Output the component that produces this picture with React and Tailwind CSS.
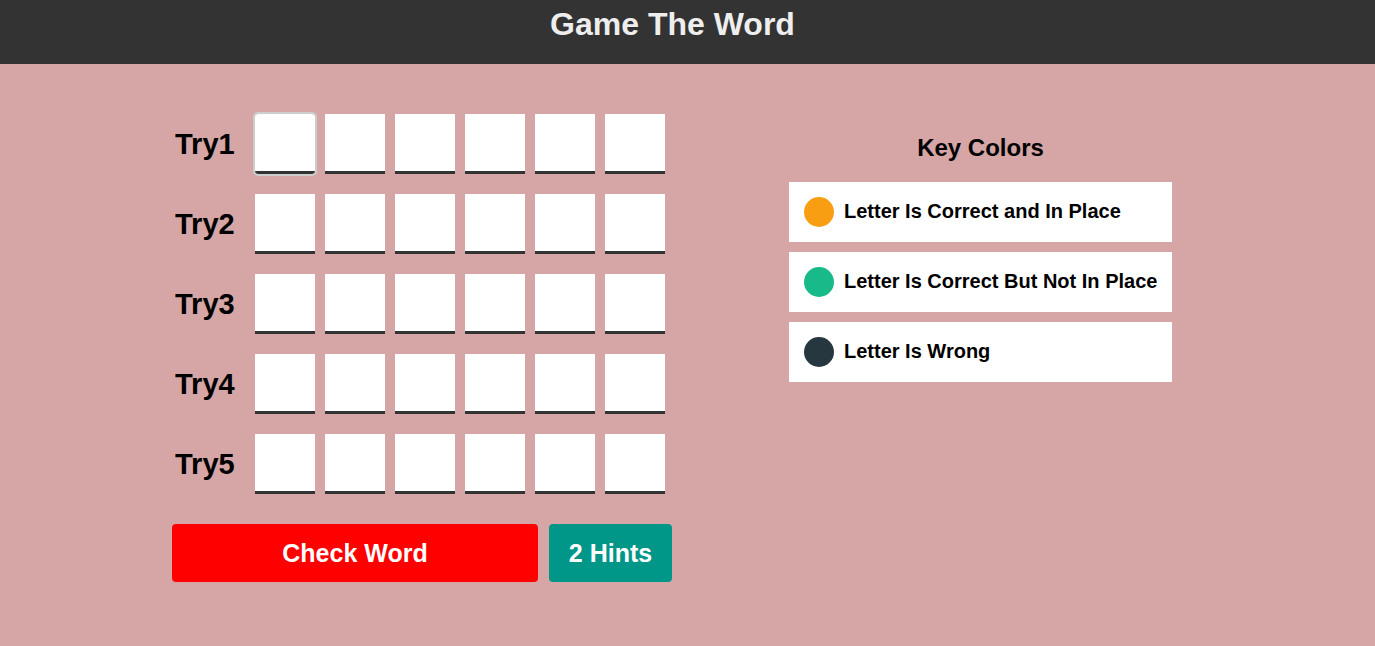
export default function App() {
  const rows = [1, 2, 3, 4, 5];
  const cells = [0, 1, 2, 3, 4, 5];
  const keys = [
    { c: "bg-[#f89e13]", t: "Letter Is Correct and In Place" },
    { c: "bg-[#18ba89]", t: "Letter Is Correct But Not In Place" },
    { c: "bg-[#27373f]", t: "Letter Is Wrong" },
  ];
  return (
    <div className="min-h-[646px] bg-[#d6a5a5] font-['Liberation_Sans',Arial,sans-serif]">
      <header className="h-[64px] bg-[#333333] flex justify-center pt-[5px] pr-[30px]">
        <h1 className="text-[32px] font-bold text-[#eeeeee] leading-[38px]">Game The Word</h1>
      </header>
      <div className="flex pl-[172px] pt-[50px]">
        <div className="w-[500px] flex flex-col">
          <div className="flex flex-col gap-[20px]">
            {rows.map((r) => (
              <div key={r} className="flex items-center">
                <div className="w-[83px] text-[29px] font-bold text-black pl-[3px] pt-[1px]">Try{r}</div>
                <div className="flex gap-[10px]">
                  {cells.map((c) => (
                    <div
                      key={c}
                      className={
                        r === 1 && c === 0
                          ? "w-[60px] h-[60px] bg-white border-b-[3px] border-[#333333] rounded-[3px] outline-2 outline-offset-0 outline-[#cdcdcd]"
                          : "w-[60px] h-[60px] bg-white border-b-[3px] border-[#333333]"
                      }
                    />
                  ))}
                </div>
              </div>
            ))}
          </div>
          <div className="flex gap-[11px] mt-[30px]">
            <button className="w-[366px] h-[58px] bg-[#ff0000] rounded-[4px] text-white text-[25px] font-bold pt-[2px]">Check Word</button>
            <button className="w-[123px] h-[58px] bg-[#009688] rounded-[4px] text-white text-[25px] font-bold pt-[2px]">2 Hints</button>
          </div>
        </div>
        <div className="ml-[117px] w-[383px] flex flex-col pt-[19px]">
          <h2 className="text-[24px] font-bold text-black text-center leading-[30px]">Key Colors</h2>
          <div className="flex flex-col gap-[10px] mt-[19px]">
            {keys.map((k) => (
              <div key={k.t} className="h-[60px] bg-white flex items-center pl-[15px] gap-[10px]">
                <span className={"w-[30px] h-[30px] rounded-full " + k.c} />
                <span className="text-[20px] font-bold text-black leading-[24px] -mt-[2px]">{k.t}</span>
              </div>
            ))}
          </div>
        </div>
      </div>
    </div>
  );
}
